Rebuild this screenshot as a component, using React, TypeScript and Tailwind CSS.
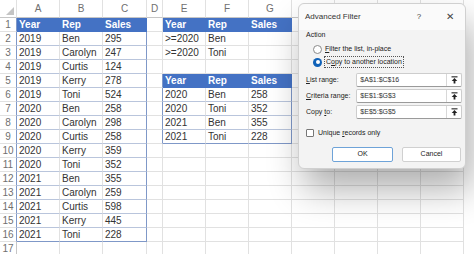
import React from "react";

const COLS = [
  { w: "w-[17px]", l: "" },
  { w: "w-[43px]", l: "A" },
  { w: "w-[43px]", l: "B" },
  { w: "w-[44px]", l: "C" },
  { w: "w-[16px]", l: "D" },
  { w: "w-[43px]", l: "E" },
  { w: "w-[43px]", l: "F" },
  { w: "w-[43px]", l: "G" },
  { w: "w-[43px]", l: "H" },
  { w: "w-[43px]", l: "I" },
  { w: "w-[43px]", l: "J" },
  { w: "w-[43px]", l: "K" },
];

const SALES: string[][] = [
  ["2019", "Ben", "295"],
  ["2019", "Carolyn", "247"],
  ["2019", "Curtis", "124"],
  ["2019", "Kerry", "278"],
  ["2019", "Toni", "524"],
  ["2020", "Ben", "258"],
  ["2020", "Carolyn", "298"],
  ["2020", "Curtis", "258"],
  ["2020", "Kerry", "359"],
  ["2020", "Toni", "352"],
  ["2021", "Ben", "355"],
  ["2021", "Carolyn", "259"],
  ["2021", "Curtis", "598"],
  ["2021", "Kerry", "445"],
  ["2021", "Toni", "228"],
];

const CRITERIA: string[][] = [
  [">=2020", "Ben", ""],
  [">=2020", "Toni", ""],
];

const RESULT: string[][] = [
  ["2020", "Ben", "258"],
  ["2020", "Toni", "352"],
  ["2021", "Ben", "355"],
  ["2021", "Toni", "228"],
];

const HEAD = ["Year", "Rep", "Sales"];

type Kind = "h" | "d" | "p" | "n";

function getCell(r: number, c: number): { t: string; k: Kind; right: boolean; last: boolean } {
  let t = "";
  let k: Kind = "p";
  let right = false;
  let last = false;
  if (c === 0) {
    return { t: String(r), k: "n", right: r <= 16, last: false };
  }
  if (c >= 1 && c <= 3) {
    if (r === 1) {
      t = HEAD[c - 1];
      k = "h";
    } else if (r <= 16) {
      t = SALES[r - 2][c - 1];
      k = "d";
      right = c === 3;
      last = r === 16;
    }
  }
  if (c === 4 && r >= 5 && r <= 9) right = true;
  if (c >= 5 && c <= 7) {
    if (r === 1 || r === 5) {
      t = HEAD[c - 5];
      k = "h";
    } else if (r === 2 || r === 3) {
      t = CRITERIA[r - 2][c - 5];
    } else if (r >= 6 && r <= 9) {
      t = RESULT[r - 6][c - 5];
      k = "d";
      right = c === 7;
      last = r === 9;
    }
  }
  return { t, k, right, last };
}

function Cell({ r, c }: { r: number; c: number }) {
  const { t, k, right, last } = getCell(r, c);
  const w = COLS[c].w;
  let cls = "";
  if (k === "n") {
    cls = `text-center text-[#707070] bg-white border-b-[#e1e1e1] ${right ? "border-r-[#7f98c8]" : "border-r-[#c6c6c6]"}`;
  } else if (k === "h") {
    cls = "bg-[#4472c4] text-white font-bold border-r-[#4472c4] border-b-[#4472c4] px-[2px]";
  } else if (k === "d") {
    cls = `bg-white text-[#333] px-[2px] ${right ? "border-r-[#7f98c8]" : "border-r-[#e1e1e1]"} ${
      last ? "border-b-[#7f98c8]" : "border-b-[#b9c5dc]"
    }`;
  } else {
    cls = `bg-white text-[#333] px-[2px] border-b-[#e1e1e1] ${right ? "border-r-[#7f98c8]" : "border-r-[#e1e1e1]"}`;
  }
  return (
    <div
      className={`${w} h-[14px] shrink-0 border-r border-b overflow-hidden whitespace-nowrap text-[10px] leading-[13px] ${cls}`}
    >
      {t}
    </div>
  );
}

function UploadIcon() {
  return (
    <svg width="7" height="8" viewBox="0 0 7 8">
      <rect x="0.5" y="0.3" width="6" height="1.1" fill="#222" />
      <path d="M3.5 2 L6.3 4.9 L4.4 4.9 L4.4 7.6 L2.6 7.6 L2.6 4.9 L0.7 4.9 Z" fill="#222" />
    </svg>
  );
}

function RangeInput({ value }: { value: string }) {
  return (
    <div className="flex h-[14px] w-[107px] items-stretch rounded-[2px] border border-[#cdcdcd] border-b-[#9a9a9a] bg-white">
      <div className="flex-1 pl-[3px] text-[7px] leading-[12px] text-[#333]">{value}</div>
      <div className="flex w-[15px] items-center justify-center border-l border-[#d8d8d8]">
        <UploadIcon />
      </div>
    </div>
  );
}

function AdvancedFilter() {
  return (
    <div className="absolute left-[298px] top-[3px] w-[168px] rounded-[6px] border border-[#d0d0d0] bg-[#f3f3f3] shadow-[6px_20px_36px_rgba(0,0,0,0.32)] font-['Liberation_Sans',Arial,sans-serif] text-[#222]">
      <div className="flex h-[26px] items-center rounded-t-[6px] bg-[#fafafa] pl-[6px] pr-[8px]">
        <span className="text-[8px] text-[#333]">Advanced Filter</span>
        <span className="ml-auto w-[14px] text-center text-[8px] text-[#444]">?</span>
        <span className="ml-[17px] w-[14px] text-center text-[10px] leading-[10px] text-[#444]">✕</span>
      </div>
      <div className="pl-[7px] pr-[3px] pb-[6px]">
        <div className="h-[9px] text-[7px] leading-[9px]">Action</div>
        <div className="mt-[4px] flex h-[12px] items-center pl-[7px]">
          <div className="h-[9px] w-[9px] rounded-full border border-[#8a8a8a] bg-white" />
          <span className="ml-[3px] text-[7px]">
            <span className="underline">F</span>ilter the list, in-place
          </span>
        </div>
        <div className="mt-[1px] flex h-[12px] items-center pl-[7px]">
          <div className="flex h-[9px] w-[9px] items-center justify-center rounded-full bg-[#1062b8]">
            <div className="h-[4px] w-[4px] rounded-full bg-white" />
          </div>
          <span className="ml-[2px] border border-dotted border-[#555] px-[1px] text-[7px] leading-[10px]">
            C<span className="underline">o</span>py to another location
          </span>
        </div>
        <div className="mt-[5px] flex flex-col gap-[2px]">
          <div className="flex items-center">
            <span className="w-[51px] text-[7px]">
              <span className="underline">L</span>ist range:
            </span>
            <RangeInput value="$A$1:$C$16" />
          </div>
          <div className="flex items-center">
            <span className="w-[51px] text-[7px]">
              <span className="underline">C</span>riteria range:
            </span>
            <RangeInput value="$E$1:$G$3" />
          </div>
          <div className="flex items-center">
            <span className="w-[51px] text-[7px]">
              Copy <span className="underline">t</span>o:
            </span>
            <RangeInput value="$E$5:$G$5" />
          </div>
        </div>
        <div className="mt-[9px] flex h-[10px] items-center">
          <div className="h-[8px] w-[8px] rounded-[1px] border border-[#777] bg-white" />
          <span className="ml-[4px] text-[7px]">
            Unique <span className="underline">r</span>ecords only
          </span>
        </div>
        <div className="mt-[9px] flex justify-end gap-[9px] pr-[1px]">
          <div className="flex h-[15px] w-[61px] items-center justify-center rounded-[2px] border border-[#6ea3d8] bg-white text-[7px]">
            OK
          </div>
          <div className="flex h-[15px] w-[59px] items-center justify-center rounded-[2px] border border-[#d0d0d0] bg-white text-[7px]">
            Cancel
          </div>
        </div>
      </div>
    </div>
  );
}

export default function App() {
  const rows = Array.from({ length: 17 }, (_, i) => i + 1);
  return (
    <div className="relative h-[254px] w-[474px] overflow-hidden bg-white font-['Liberation_Sans',Arial,sans-serif]">
      <div className="flex">
        {COLS.map((col, c) => (
          <div
            key={c}
            className={`${col.w} relative h-[18px] shrink-0 border-r border-b border-r-[#e1e1e1] border-b-[#c6c6c6] text-center text-[10px] leading-[17px] text-[#707070]`}
          >
            {c === 0 ? (
              <svg className="absolute bottom-[2px] right-[2px]" width="8" height="8" viewBox="0 0 8 8">
                <path d="M8 0 L8 8 L0 8 Z" fill="#c4c4c4" />
              </svg>
            ) : (
              col.l
            )}
          </div>
        ))}
      </div>
      {rows.map((r) => (
        <div key={r} className="flex">
          {COLS.map((_, c) => (
            <Cell key={c} r={r} c={c} />
          ))}
        </div>
      ))}
      <AdvancedFilter />
    </div>
  );
}
